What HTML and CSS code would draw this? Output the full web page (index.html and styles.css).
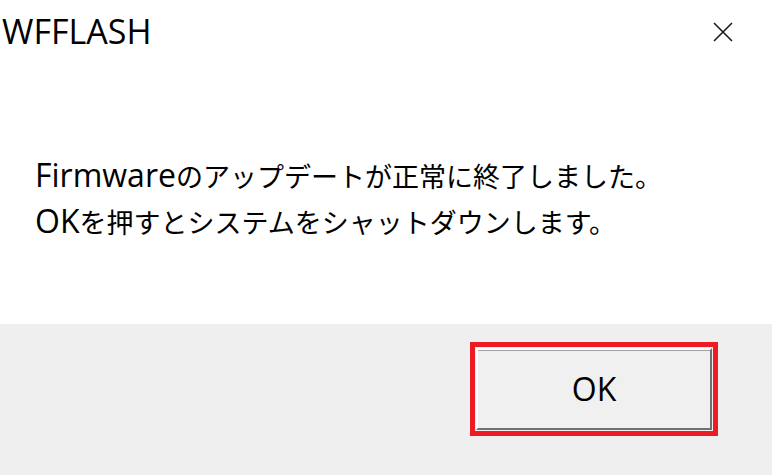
FILE: index.html
```html
<!doctype html>
<html>
    <head>
        <meta charset="utf-8">
        <title>WFFLASH</title>
        <link rel="stylesheet" href="styles.css">
    </head>
    <body>
        <div class="dialog">
            <div class="titlebar">
                <span class="title">WFFLASH</span>
                <span class="close">
                    <svg width="20" height="20" viewBox="0 0 20 20">
                        <path d="M1 1 L19 19 M19 1 L1 19" stroke="#1a1a1a" stroke-width="1.6" fill="none"/>
                    </svg>
                </span>
            </div>
            <div class="message">
                <p><span class="latin">Firmware</span>のアップデートが正常に終了しました。</p>
                <p><span class="latin">OK</span>を押すとシステムをシャットダウンします。</p>
            </div>
            <div class="footer">
                <span class="ok-frame">
                    <button class="ok">OK</button>
                </span>
            </div>
        </div>
    </body>
</html>
```

FILE: styles.css
```css
* {
    box-sizing: border-box;
}

html, body {
    margin: 0;
    padding: 0;
    background: #fff;
}

.dialog {
    display: flex;
    flex-direction: column;
    width: 772px;
    height: 475px;
}

.titlebar {
    display: flex;
    justify-content: space-between;
    align-items: center;
    height: 62px;
    padding-left: 2px;
    padding-right: 39px;
}

.title {
    font-family: "Open Sans", sans-serif;
    font-size: 34px;
    line-height: 62px;
    color: #000;
}

.close {
    display: flex;
    margin-top: 1px;
}

.message {
    height: 262px;
    padding-top: 91px;
    padding-left: 35px;
    font-family: "Noto Sans CJK JP", sans-serif;
    font-size: 27px;
    line-height: 46px;
    color: #000;
}

.message p {
    margin: 0;
    white-space: nowrap;
}

.latin {
    font-family: "Open Sans", sans-serif;
    font-size: 32px;
    line-height: 1;
}

.footer {
    flex: 1;
    display: flex;
    justify-content: flex-end;
    align-items: flex-start;
    padding-top: 18px;
    padding-right: 54px;
    background: #efefef;
}

.ok-frame {
    display: block;
    width: 248px;
    height: 94px;
    padding: 1px;
    border: 5px solid #ed1c24;
    background: #f0f0f0;
}

.ok {
    display: block;
    width: 100%;
    height: 100%;
    margin: 0;
    padding: 0 0 2px 0;
    border: 2px solid;
    border-color: #fff #707070 #707070 #fff;
    box-shadow: inset 0 1px 0 #a0a0a0;
    background: #f0f0f0;
    font-family: "Open Sans", sans-serif;
    font-size: 32px;
    color: #000;
    outline: none;
}
```
